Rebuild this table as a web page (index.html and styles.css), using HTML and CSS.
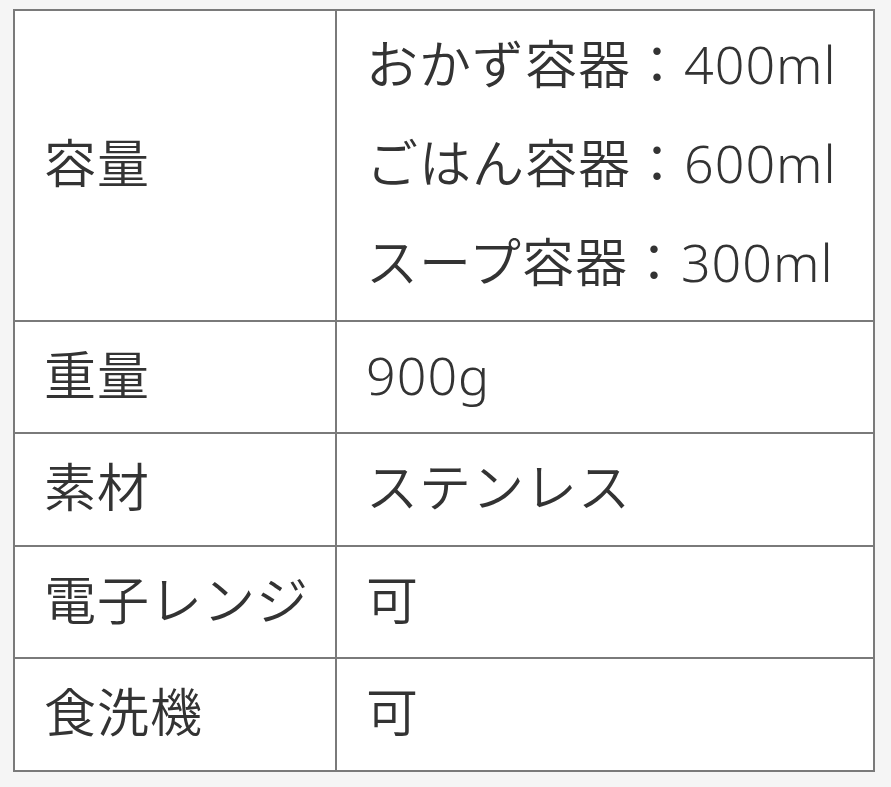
FILE: index.html
```html
<!DOCTYPE html>
<html lang="ja">
<head>
<meta charset="utf-8">
<title>仕様</title>
<link rel="stylesheet" href="styles.css">
</head>
<body>
<table class="spec">
  <colgroup>
    <col class="spec-key-col">
    <col>
  </colgroup>
  <tbody>
    <tr>
      <td class="spec-key">容量</td>
      <td class="spec-val">おかず容器：400ml<br>ごはん容器：600ml<br>スープ容器：300ml</td>
    </tr>
    <tr>
      <td class="spec-key">重量</td>
      <td class="spec-val">900g</td>
    </tr>
    <tr>
      <td class="spec-key">素材</td>
      <td class="spec-val">ステンレス</td>
    </tr>
    <tr>
      <td class="spec-key">電子レンジ</td>
      <td class="spec-val">可</td>
    </tr>
    <tr>
      <td class="spec-key">食洗機</td>
      <td class="spec-val">可</td>
    </tr>
  </tbody>
</table>
</body>
</html>
```

FILE: styles.css
```css
html, body {
  margin: 0;
  padding: 0;
  background: #f5f5f5;
}

body {
  padding: 9px 0 0 13px;
  font-family: "Noto Sans", "Noto Sans CJK JP", sans-serif;
  font-size: 52px;
  font-weight: 350;
  letter-spacing: 1px;
  color: #333333;
}

.spec {
  border-collapse: collapse;
  width: 862px;
  background: #ffffff;
  table-layout: fixed;
}

.spec-key-col {
  width: 322px;
}

.spec td {
  border: 2px solid #7a7a7a;
  padding: 3px 29px 8.5px;
  line-height: 99px;
  vertical-align: middle;
  text-align: left;
  white-space: nowrap;
}
```
